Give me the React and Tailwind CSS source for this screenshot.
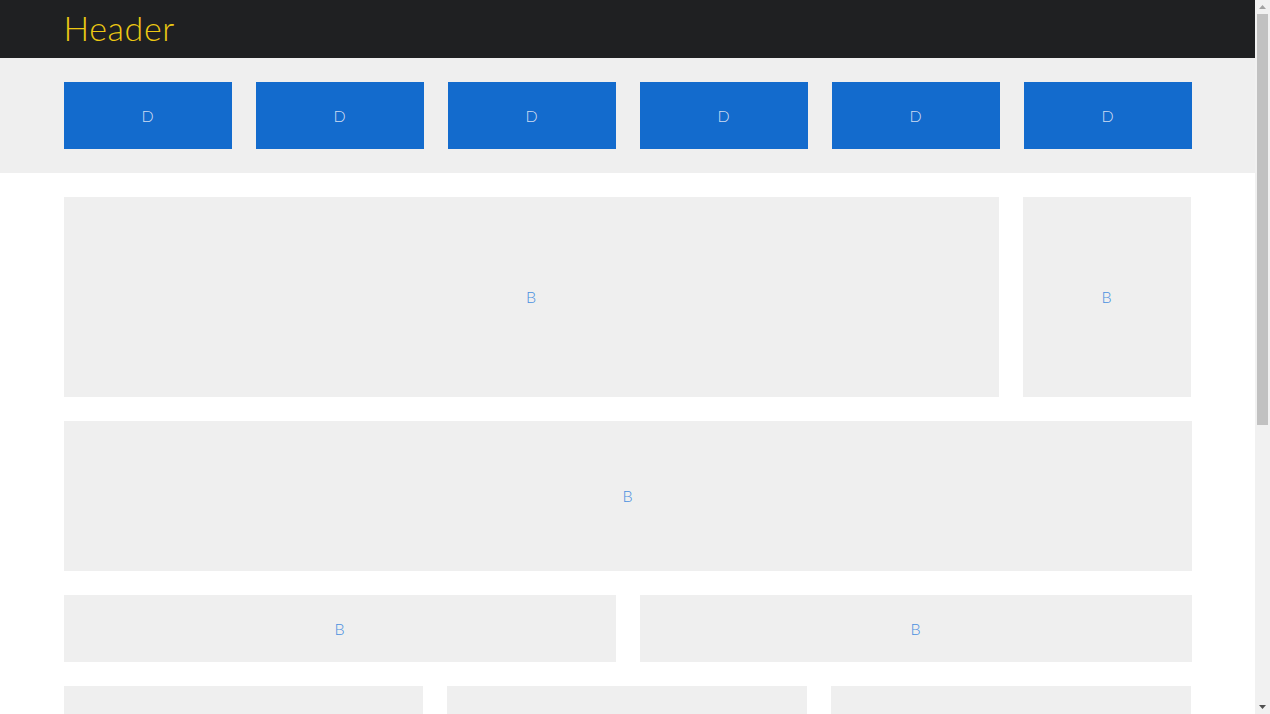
import React from 'react'

const font = { fontFamily: 'Lato, "Open Sans", sans-serif' }

const Box = ({ className }) => (
    <div className={`bg-[#efefef] flex items-center justify-center text-[16px] font-light text-[#4a8fe0] ${className}`}>B</div>
)

// fake window scrollbar, the screenshot shows one
const ScrollBar = () => (
    <div className='w-[15px] h-full bg-[#f1f1f1] flex flex-col items-center shrink-0'>
        <div className='h-[14px] w-full flex items-center justify-center'>
            <svg width='7' height='4' viewBox='0 0 7 4'><path d='M3.5 0L7 4H0z' fill='#a3a3a3' /></svg>
        </div>
        <div className='w-[11px] h-[411px] bg-[#c1c1c1]' />
        <div className='flex-1' />
        <div className='h-[14px] w-full flex items-center justify-center'>
            <svg width='7' height='4' viewBox='0 0 7 4'><path d='M0 0H7L3.5 4z' fill='#505050' /></svg>
        </div>
    </div>
)

const App = () => {
    const tiles = [1, 2, 3, 4, 5, 6]
    return (
        <div style={font} className='h-screen flex overflow-hidden bg-white'>
            <div className='flex-1 min-w-0 overflow-hidden'>
                {/* header */}
                <header className='bg-[#1f2022] h-[58px]'>
                    <div className='w-[1128px] mx-auto h-full flex items-center pb-[3px]'>
                        <h1 className='text-[34px] font-light text-[#ecc813] tracking-[0.6px] leading-none'>Header</h1>
                    </div>
                </header>
                {/* D tiles */}
                <section className='bg-[#efefef] py-6'>
                    <div className='w-[1128px] mx-auto grid grid-cols-6 gap-6'>
                        {tiles.map(t => (
                            <div key={t} className='bg-[#136bcd] h-[67px] flex items-center justify-center text-[16px] font-light text-[#cfdcf2]'>D</div>
                        ))}
                    </div>
                </section>
                {/* B blocks */}
                <main className='w-[1128px] mx-auto py-6 flex flex-col gap-6'>
                    <div className='grid grid-cols-[935px_168px] gap-6'>
                        <Box className='h-[200px]' />
                        <Box className='h-[200px]' />
                    </div>
                    <Box className='h-[150px]' />
                    <div className='grid grid-cols-2 gap-6'>
                        <Box className='h-[67px]' />
                        <Box className='h-[67px]' />
                    </div>
                    <div className='grid grid-cols-[359px_360px_360px] gap-6'>
                        <Box className='h-[200px]' />
                        <Box className='h-[200px]' />
                        <Box className='h-[200px]' />
                    </div>
                    <Box className='h-[150px]' />
                </main>
            </div>
            <ScrollBar />
        </div>
    )
}

export default App
